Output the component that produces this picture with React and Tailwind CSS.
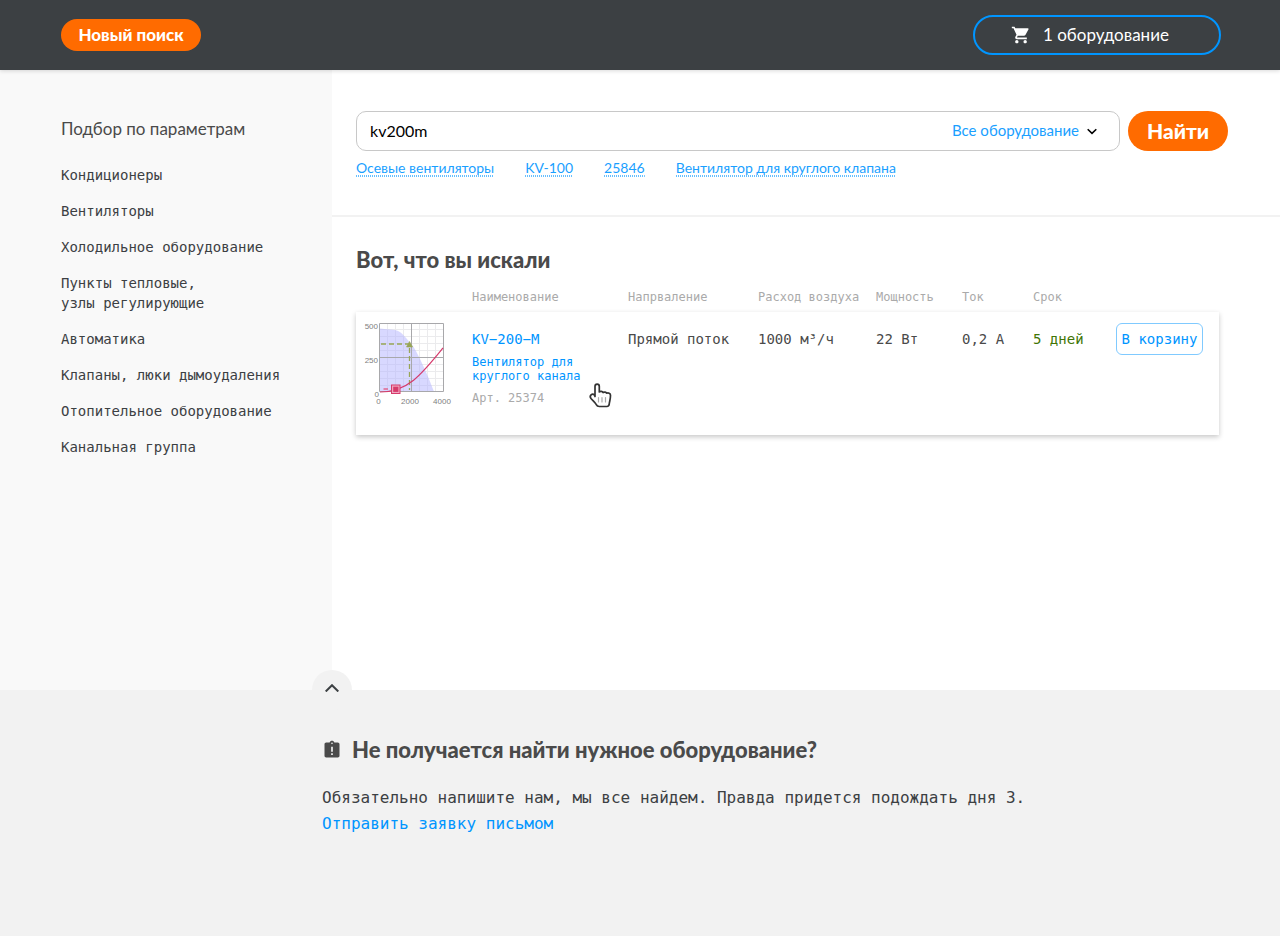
import { MdShoppingCart, MdAssignmentLate } from "react-icons/md";

const sans = "font-['Lato','Open_Sans',sans-serif]";

const categories = [
  ["Кондиционеры"],
  ["Вентиляторы"],
  ["Холодильное оборудование"],
  ["Пункты тепловые,", "узлы регулирующие"],
  ["Автоматика"],
  ["Клапаны, люки дымоудаления"],
  ["Отопительное оборудование"],
  ["Канальная группа"],
];

const hints = ["Осевые вентиляторы", "KV-100", "25846", "Вентилятор для круглого клапана"];

const columns = [
  { label: "", width: "w-[116px]" },
  { label: "Наименование", width: "w-[156px]" },
  { label: "Напрваление", width: "w-[130px]" },
  { label: "Расход воздуха", width: "w-[118px]" },
  { label: "Мощность", width: "w-[86px]" },
  { label: "Ток", width: "w-[71px]" },
  { label: "Срок", width: "w-[83px]" },
  { label: "", width: "w-[103px]" },
];

function Header() {
  return (
    <header className="relative z-10 flex h-[70px] items-center justify-between bg-[#3c4043] pr-[59px] pl-[61px] shadow-[0_1px_4px_rgba(0,0,0,0.15)]">
      <button type="button" className={`h-8 w-[140px] rounded-full bg-[#ff6b00] text-[17px] font-black text-white ${sans}`}>
        Новый поиск
      </button>
      <button
        type="button"
        className={`flex h-10 w-[248px] items-center gap-3 rounded-full border-2 border-[#0095ff] pl-9 text-[17px] text-white ${sans}`}
      >
        <MdShoppingCart className="size-5" aria-hidden="true" />
        <span>1 оборудование</span>
      </button>
    </header>
  );
}

function Sidebar() {
  return (
    <aside className="w-[332px] shrink-0 bg-[#f9f9f9] pt-12 pl-[61px]">
      <h2 className={`text-[17px] leading-[22px] text-[#4a4a4a] ${sans}`}>Подбор по параметрам</h2>
      <ul className="mt-[25px] flex flex-col gap-4 text-sm leading-5 text-[#3c4043]">
        {categories.map((lines) => (
          <li key={lines[0]}>
            <a href="#" className="block">
              {lines.map((line) => (
                <span key={line} className="block">{line}</span>
              ))}
            </a>
          </li>
        ))}
      </ul>
    </aside>
  );
}

function Search() {
  return (
    <form className={`border-b-2 border-[#f2f2f2] pt-[41px] pr-[52px] pb-[38px] pl-6 ${sans}`}>
      <div className="flex gap-2">
        <div className="flex h-10 flex-1 items-center rounded-[10px] border border-[#c8c8c8] pr-[22px] pl-[13px]">
          <input
            aria-label="Поиск оборудования"
            defaultValue="kv200m"
            className="min-w-0 flex-1 text-base text-black outline-none"
          />
          <div className="flex items-center gap-2">
            <select aria-label="Категория" className="appearance-none pb-0.5 text-[15px] text-[#1a9fff] outline-none">
              <option>Все оборудование</option>
            </select>
            <svg viewBox="0 0 10 8" className="h-2 w-[10px]" fill="none" stroke="#000" strokeWidth="1.6" aria-hidden="true">
              <path d="M.7 2.200l4.300 4.200 4.300-4.200" />
            </svg>
          </div>
        </div>
        <button type="button" className="h-10 w-[100px] rounded-full bg-[#ff6b00] text-[21px] font-black text-white">
          Найти
        </button>
      </div>
      <div className="mt-2 flex gap-[31px] text-sm leading-[18px] text-[#1a9fff]">
        {hints.map((hint) => (
          <a
            key={hint}
            href="#"
            className="bg-[repeating-linear-gradient(90deg,#66bfff_0_1px,transparent_1px_2px)] bg-[length:100%_2px] bg-bottom bg-no-repeat"
          >
            {hint}
          </a>
        ))}
      </div>
    </form>
  );
}

function Chart() {
  return (
    <svg viewBox="0 0 92 90" className="h-[90px] w-[92px]" role="img" aria-label="Рабочая характеристика">
      <g stroke="#ebebed" strokeWidth="1">
        <path d="M27.5 5v69M35.5 5v69M43.5 5v69M59.5 5v69M67.5 5v69M75.5 5v69" />
        <path d="M20 11.5h63M20 18.5h63M20 25.5h63M20 32.5h63M20 46.5h63M20 53.5h63M20 60.5h63M20 67.5h63" />
      </g>
      <path d="M19.500 10.500L35 12C42 13 47 22 51.500 26C57 33 67 55 74 73.500L19.500 73.500Z" fill="#b4b4ff" fillOpacity=".52" />
      <path d="M19.500 5.500h64v68h-64zM51.500 5v68M19 39.500h64" fill="none" stroke="#a8a8ab" />
      <path d="M21 26h28M49.500 30v42" stroke="#98a656" strokeWidth="1.300" strokeDasharray="5 3" fill="none" />
      <path d="M49.500 23.500l3 5.500h-6z" fill="#98a656" stroke="#98a656" strokeWidth=".6" />
      <path d="M20 74C48 74 62 56 83 30" fill="none" stroke="#d63a6c" strokeWidth="1.200" />
      <path d="M23.500 71h4.500" stroke="#e0668f" strokeWidth="1.500" />
      <rect x="31.500" y="67" width="8.500" height="8.500" fill="#f0a6bf" stroke="#d63a6c" />
      <rect x="33.200" y="68.700" width="5.200" height="5.200" fill="#d63a6c" />
      <g fill="#808080" fontFamily="Liberation Sans, sans-serif" fontSize="8">
        <text x="18" y="11" textAnchor="end">500</text>
        <text x="18" y="45" textAnchor="end">250</text>
        <text x="19" y="79" textAnchor="end">0</text>
        <text x="18.500" y="86" textAnchor="middle">0</text>
        <text x="50" y="86" textAnchor="middle">2000</text>
        <text x="82" y="86" textAnchor="middle">4000</text>
      </g>
    </svg>
  );
}

function Hand() {
  return (
    <svg viewBox="0 0 24 26" className="absolute top-[70px] left-[116px] h-[26px] w-6" fill="#fff" stroke="#333" strokeWidth="1.700" strokeLinejoin="round" strokeLinecap="round" aria-hidden="true">
      <path d="M7 14.500V4.500C7 1.200 11.300 1.200 11.300 4.500V10c1-1 3-1 3.800.5 1.200-.8 2.900-.4 3.500.7 1.600-.8 3.900 0 3.900 2 0 4-.9 6-1.200 8.300-.1 2-.9 3-2.500 3h-7.500c-1.500 0-2.400-.5-3-1.800-1.200-2.300-3.600-4-5.300-6.200-2.200-3.100 1.300-5.600 3.400-3.600z" />
      <path d="M10.500 15.500v4.500M14 15.500v4.500M17.500 15.500v4.500" stroke="#aaa" strokeWidth="1.200" />
    </svg>
  );
}

function Results() {
  return (
    <section className="pt-[30px] pr-[61px] pb-10 pl-6">
      <h1 className={`text-[22px] leading-[26px] font-black text-[#4a4a4a] ${sans}`}>Вот, что вы искали</h1>
      <table className="mt-[9px] w-full table-fixed border-separate border-spacing-0 text-left">
        <thead>
          <tr className="h-[30px] text-xs text-[#aaa]">
            {columns.map((column, index) => (
              <th key={index} className={`p-0 align-middle font-normal whitespace-nowrap ${column.width}`}>
                {column.label}
              </th>
            ))}
          </tr>
        </thead>
        <tbody>
          <tr className="h-[123px] text-sm leading-5 text-[#4a4a4a] shadow-[0_2px_5px_rgba(0,0,0,0.22)] *:p-0 *:pt-[17px] *:align-top *:whitespace-nowrap">
            <td className="pt-1.5! pl-1!"><Chart /></td>
            <td className="relative">
              <a href="#" className="block text-[#0095ff]">KV−200−M</a>
              <a href="#" className="mt-1.5 block text-xs leading-[14px] text-[#0095ff]">
                Вентилятор для<br />круглого канала
              </a>
              <p className="mt-2 text-xs leading-[14px] text-[#aaa]">Арт. 25374</p>
              <Hand />
            </td>
            <td>Прямой поток</td>
            <td>1000 м³/ч</td>
            <td>22 Вт</td>
            <td>0,2 А</td>
            <td className="text-[#417505]">5 дней</td>
            <td className="pt-[11px]!">
              <button type="button" className="h-8 w-[87px] rounded-md border border-[#80caff] text-[#0095ff]">
                В корзину
              </button>
            </td>
          </tr>
        </tbody>
      </table>
    </section>
  );
}

function Help() {
  return (
    <footer className="relative bg-[#f2f2f2] pt-12 pr-6 pb-[99px] pl-[322px]">
      <button
        type="button"
        aria-label="Свернуть"
        className="absolute -top-5 left-[312px] flex size-10 items-center justify-center rounded-full bg-[#f2f2f2]"
      >
        <svg viewBox="0 0 14 8" className="mb-1 h-2 w-[14px]" fill="none" stroke="#3c4043" strokeWidth="2" aria-hidden="true">
          <path d="M.7 7.500L7 1.200l6.300 6.300" />
        </svg>
      </button>
      <h2 className={`flex items-center gap-2.5 text-[22px] leading-6 font-black text-[#4a4a4a] ${sans}`}>
        <MdAssignmentLate className="size-5" aria-hidden="true" />
        Не получается найти нужное оборудование?
      </h2>
      <p className="mt-[23px] text-base leading-[26px] text-[#3c4043]">
        Обязательно напишите нам, мы все найдем. Правда придется подождать дня 3.
        <a href="#" className="block w-fit text-[#0095ff]">Отправить заявку письмом</a>
      </p>
    </footer>
  );
}

export default function App() {
  return (
    <div className="flex min-h-screen flex-col bg-white font-['DejaVu_Sans_Mono',monospace]">
      <Header />
      <div className="flex flex-1">
        <Sidebar />
        <main className="min-w-0 flex-1">
          <Search />
          <Results />
        </main>
      </div>
      <Help />
    </div>
  );
}
